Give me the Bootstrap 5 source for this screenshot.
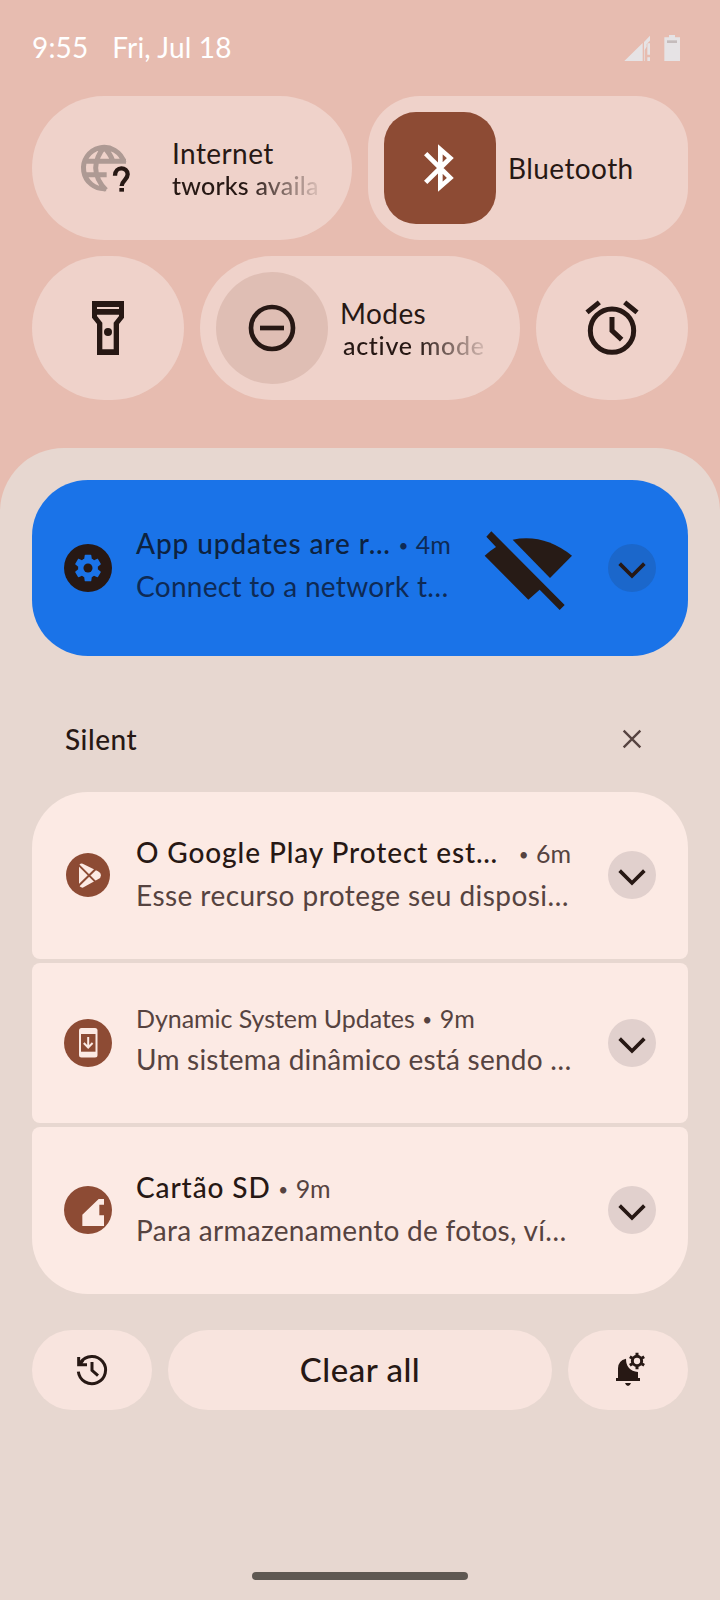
<!DOCTYPE html>
<html lang="en">
<head>
<meta charset="utf-8">
<meta name="viewport" content="width=device-width, initial-scale=1">
<title>Notification shade</title>
<link rel="stylesheet" href="https://cdn.jsdelivr.net/npm/bootstrap@5.3.0/dist/css/bootstrap.min.css">
<style>
body{background:#e7bcb0;color:#271814;font-family:Lato,"Open Sans",sans-serif;font-size:28px;height:1600px;overflow:hidden}
svg{display:block;flex:none}
.status{height:96px;padding:0 40px 2px 32px;color:#fff;letter-spacing:.15px}
.date{margin-left:24px}
.tiles{height:352px;padding:0 32px}
.tile{height:144px;background:#efd2ca;border-radius:72px}
.tile-on{border-radius:52px}
.tile-wide{width:320px;padding:16px}
.tile-small{width:152px}
.tile-icon{width:112px;height:112px;border-radius:56px;flex:none}
.tile-icon.on{background:#8d4b34;border-radius:32px}
.tile-icon.dim{background:#dfbeb4}
.tile-text{line-height:32px;margin-left:12px;width:148px;white-space:nowrap;overflow:hidden;letter-spacing:.42px}
.tile-text.two-line{padding-top:1px}
.tile-sub{font-size:25px;font-weight:500;line-height:32px;letter-spacing:.2px;-webkit-mask:linear-gradient(90deg,#000 52%,rgba(0,0,0,.12) 98%);mask:linear-gradient(90deg,#000 52%,rgba(0,0,0,.12) 98%)}
.tile-sub.wider{letter-spacing:.7px;padding-left:3px}
.shade{height:1152px;background:#e7d7d0;border-radius:64px 64px 0 0;padding:32px 32px 0}
.note{background:#fceae4;padding:0 32px;border-radius:8px;white-space:nowrap}
.note-blue{background:#1a73e8;height:176px;border-radius:56px;color:#0d2240}
.note-first{height:167px;border-radius:56px 56px 8px 8px;padding-bottom:1px}
.note-mid{height:160px}
.note-last{height:167px;border-radius:8px 8px 56px 56px;padding-bottom:1px}
.note-body{margin-left:24px;align-self:flex-start;line-height:42px;padding-top:38.5px}
.note-blue .note-body{padding-top:42px}
.note-mid .note-body{padding-top:35px;line-height:41px}
.note-title{font-weight:500;letter-spacing:.9px}
.meta,.sub{color:#564340}
.sub{letter-spacing:.3px}
.note-mid .sub{letter-spacing:.22px}
.sub.loose{letter-spacing:.44px}
.note-blue .sub,.note-blue .meta{color:#0e2a55}
.meta{font-size:25px;letter-spacing:-.05px}
.dot{display:inline-block;width:25px;text-align:center;font-size:17px;vertical-align:2px;line-height:1}
.dot.far{margin-left:13px}
.silent{height:136px;padding:30px 32px 0 33px}
.silent .note-title{letter-spacing:.5px}
.pill{height:80px;border-radius:40px;background:#f8e4de}
.pill-side{width:120px}
.pill-main{font-size:33px;font-weight:500;letter-spacing:.5px}
.home{width:216px;height:8px;border-radius:4px;background:#5f5852;margin-top:162px}
.stroke-ink{fill:none;stroke:#271814}
</style>
</head>
<body>
<header class="status d-flex align-items-center justify-content-between">
  <div class="d-flex"><span>9:55</span><span class="date">Fri, Jul 18</span></div>
  <svg class="mt-1" width="56" height="28" viewBox="792 105 168 84" fill="#e6e3e5"><path d="M793 183L848 129V183ZM852 126L870 107V122L860 132V140L854 150V183H852Z"/><path d="M862 130h8v34h-8zM862 172h8v11h-8z"/><path d="M927 105h18v7h15v71h-47v-71h14z"/><path d="M921 121h30v8h-30z" fill="#c5bcbc"/></svg>
</header>
<section class="tiles d-flex flex-column gap-3">
  <div class="d-flex gap-3">
    <div class="tile tile-wide d-flex align-items-center">
      <div class="tile-icon d-flex align-items-center justify-content-center">
        <svg width="52" height="52" viewBox="234 426 156 156" fill="none" stroke="#ae9a94" stroke-width="15"><path d="M372 487A62 62 0 1 0 318 566M254 484H378M254 524H320M312 442Q288 470 287 504Q288 540 318 570M312 442Q331 462 338 482"/><path d="M345 527C345 497 383 500 383 523C383 540 365 541 365 558" stroke="#271814" stroke-width="13"/><path d="M358 564h14v11h-14z" fill="#271814" stroke="none"/></svg>
      </div>
      <div class="tile-text two-line"><div>Internet</div><div class="tile-sub">tworks availa</div></div>
    </div>
    <div class="tile tile-on tile-wide d-flex align-items-center">
      <div class="tile-icon on d-flex align-items-center justify-content-center">
        <svg width="52" height="52" viewBox="162 426 156 156" fill="none" stroke="#fff" stroke-width="14"><path d="M197 461L271 534L241 560V448L271 474L197 547"/></svg>
      </div>
      <div class="tile-text">Bluetooth</div>
    </div>
  </div>
  <div class="d-flex gap-3">
    <div class="tile tile-small d-flex align-items-center justify-content-center">
      <svg width="56" height="56" viewBox="240 180 168 168"><path fill="#271814" fill-rule="evenodd" d="M276 183H372V233L357 252V345H291V252L276 233ZM291 201V207H357V201ZM291 224V228L307 248V328H341V248L357 228V224Z"/><circle cx="324" cy="276" r="12" fill="#271814"/></svg>
    </div>
    <div class="tile tile-wide d-flex align-items-center">
      <div class="tile-icon dim d-flex align-items-center justify-content-center">
        <svg width="52" height="52" viewBox="738 186 156 156" class="stroke-ink" stroke-width="14"><circle cx="816" cy="264" r="63"/><path d="M780 264H852"/></svg>
      </div>
      <div class="tile-text two-line"><div>Modes</div><div class="tile-sub wider">active mode</div></div>
    </div>
    <div class="tile tile-small d-flex align-items-center justify-content-center">
      <svg width="56" height="56" viewBox="672 180 168 168" class="stroke-ink" stroke-width="15"><circle cx="756" cy="272" r="65"/><path d="M756 231V272L785 299M681 217L718 187M794 187L831 217"/></svg>
    </div>
  </div>
</section>
<main class="shade">
  <article class="note note-blue d-flex align-items-center">
    <svg width="48" height="48" viewBox="0 0 48 48"><circle cx="24" cy="24" r="24" fill="#271814"/><g transform="translate(7.5 7.5) scale(1.375)"><path fill="#1a73e8" d="M19.14 12.94c.04-.3.06-.61.06-.94 0-.32-.02-.64-.07-.94l2.03-1.58c.18-.14.23-.41.12-.61l-1.92-3.32c-.12-.22-.37-.29-.59-.22l-2.39.96c-.5-.38-1.03-.7-1.62-.94l-.36-2.54c-.04-.24-.24-.41-.48-.41h-3.84c-.24 0-.43.17-.47.41l-.36 2.54c-.59.24-1.13.57-1.62.94l-2.39-.96c-.22-.08-.47 0-.59.22L2.74 8.87c-.12.21-.08.47.12.61l2.03 1.58c-.05.3-.09.63-.09.94s.02.64.07.94l-2.03 1.58c-.18.14-.23.41-.12.61l1.92 3.32c.12.22.37.29.59.22l2.39-.96c.5.38 1.03.7 1.62.94l.36 2.54c.05.24.24.41.48.41h3.84c.24 0 .44-.17.47-.41l.36-2.54c.59-.24 1.13-.56 1.62-.94l2.39.96c.22.08.47 0 .59-.22l1.92-3.32c.12-.22.07-.47-.12-.61z"/><circle cx="12" cy="12" r="3.3" fill="#271814"/></g></svg>
    <div class="note-body"><div><span class="note-title">App updates are r…</span><span class="meta"><span class="dot">•</span>4m</span></div><div class="sub">Connect to a network t…</div></div>
    <svg class="ms-auto mt-2" width="90" height="82" viewBox="371 183 270 246" fill="#271b16"><path d="M393 184L613 405L598 420L538 359L504 389L373 257Q388 243 407 231L378 200Z"/><path d="M457 209Q550 190 635 257L569 324Z"/></svg>
    <svg style="margin-left:34px" width="48" height="48" viewBox="744 213 144 144"><circle cx="816" cy="285" r="72" fill="#1b67cb"/><path class="stroke-ink" stroke-width="11" d="M779 272L816 309L853 272"/></svg>
  </article>
  <div class="silent d-flex align-items-center justify-content-between"><span class="note-title">Silent</span>
    <svg width="48" height="48" viewBox="744 737 144 144"><path d="M791 784L841 834M841 784L791 834" stroke="#564340" stroke-width="7"/></svg></div>
  <div class="d-flex flex-column gap-1">
    <article class="note note-first d-flex align-items-center">
      <svg width="48" height="48" viewBox="192 213 144 144"><circle cx="264" cy="285" r="66" fill="#8d4b34"/><path fill="#fceae4" d="M237 260Q237 249 248 251L294 274Q303 278 303 286Q303 294 294 298L248 323Q237 322 237 312Z"/><path d="M234 253L294 313M234 319L294 260" stroke="#8d4b34" stroke-width="6"/></svg>
      <div class="note-body"><div><span class="note-title">O Google Play Protect est…</span><span class="meta"><span class="dot far">•</span>6m</span></div><div class="sub loose">Esse recurso protege seu disposi…</div></div>
      <svg class="ms-auto" width="48" height="48" viewBox="744 213 144 144"><circle cx="816" cy="285" r="72" fill="#e1d0cd"/><path class="stroke-ink" stroke-width="11" d="M779 272L816 309L853 272"/></svg>
    </article>
    <article class="note note-mid d-flex align-items-center">
      <svg width="48" height="48" viewBox="64 1019 48 48"><circle cx="88" cy="1043" r="24" fill="#8d4b34"/><rect x="79" y="1028" width="18.5" height="29.5" rx="2.5" fill="#fceae4"/><path fill="#8d4b34" d="M81 1034h14.5v17.7h-14.5z"/><path d="M88.2 1037V1047M83.8 1043L88.2 1047.5L92.6 1043" fill="none" stroke="#fceae4" stroke-width="2"/></svg>
      <div class="note-body"><div class="meta">Dynamic System Updates<span class="dot">•</span>9m</div><div class="sub">Um sistema dinâmico está sendo …</div></div>
      <svg class="ms-auto" width="48" height="48" viewBox="744 213 144 144"><circle cx="816" cy="285" r="72" fill="#e1d0cd"/><path class="stroke-ink" stroke-width="11" d="M779 272L816 309L853 272"/></svg>
    </article>
    <article class="note note-last d-flex align-items-center">
      <svg width="48" height="48" viewBox="192 438 144 144"><circle cx="264" cy="510" r="72" fill="#8d4b34"/><path fill="#fceae4" d="M296 477H312V494H298V526H312V558H247V524Z"/></svg>
      <div class="note-body"><div><span class="note-title">Cartão SD</span><span class="meta"><span class="dot">•</span>9m</span></div><div class="sub">Para armazenamento de fotos, ví…</div></div>
      <svg class="ms-auto" width="48" height="48" viewBox="744 213 144 144"><circle cx="816" cy="285" r="72" fill="#e1d0cd"/><path class="stroke-ink" stroke-width="11" d="M779 272L816 309L853 272"/></svg>
    </article>
  </div>
  <footer style="margin-top:36px">
    <div class="d-flex gap-3">
      <div class="pill pill-side d-flex align-items-center justify-content-center">
        <svg width="40" height="40" viewBox="216 150 120 120" class="stroke-ink" stroke-width="9"><path d="M235 215A41 41 0 1 0 242 187M236 171V194H261M240 192L249 181M276 186V211L294 227"/></svg>
      </div>
      <div class="pill pill-main flex-grow-1 d-flex align-items-center justify-content-center">Clear all</div>
      <div class="pill pill-side d-flex align-items-center justify-content-center">
        <svg width="40" height="40" viewBox="744 150 120 120"><path fill="#271814" d="M768 243V234H774V205Q774 182 798 176Q798 212 834 216V234H840V243ZM795 249H813Q810 258 804 258Q798 258 795 249Z"/><circle cx="831" cy="183" r="14" class="stroke-ink" stroke-width="9"/><path class="stroke-ink" stroke-width="9" d="M831 158V167M831 199V208M809.500 170.500L817 175M845 191L852.500 195.500M809.500 195.500L817 191M845 175L852.500 170.500"/></svg>
      </div>
    </div>
    <div class="home mx-auto"></div>
  </footer>
</main>
<script src="https://cdn.jsdelivr.net/npm/bootstrap@5.3.0/dist/js/bootstrap.bundle.min.js"></script>
</body>
</html>
